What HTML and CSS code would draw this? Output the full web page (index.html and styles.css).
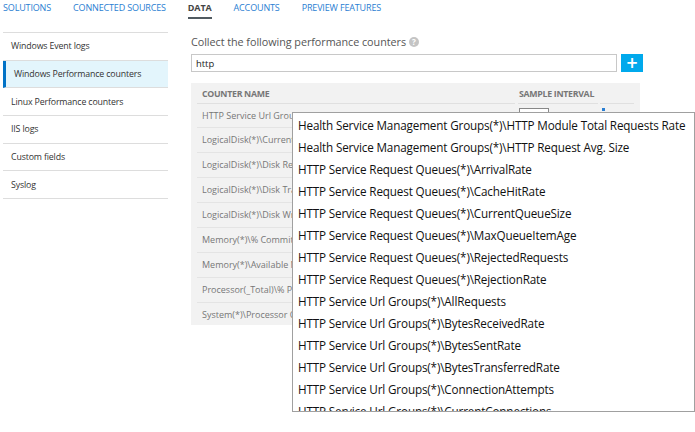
FILE: index.html
```html
<!DOCTYPE html>
<html>
<head>
<meta charset="utf-8">
<link rel="stylesheet" href="styles.css">
</head>
<body>
<nav class="topnav">
  <a class="tab">SOLUTIONS</a>
  <a class="tab">CONNECTED SOURCES</a>
  <a class="tab active">DATA</a>
  <a class="tab">ACCOUNTS</a>
  <a class="tab">PREVIEW FEATURES</a>
</nav>
<div class="main">
  <ul class="sidenav">
    <li>Windows Event logs</li>
    <li class="selected">Windows Performance counters</li>
    <li>Linux Performance counters</li>
    <li>IIS logs</li>
    <li>Custom fields</li>
    <li>Syslog</li>
  </ul>
  <section class="content">
    <div class="title">Collect the following performance counters <span class="help">?</span></div>
    <div class="search">
      <div class="input">http</div>
      <button class="add">+</button>
    </div>
    <div class="table">
      <div class="thead">
        <div class="c-name">COUNTER NAME</div>
        <div class="c-int">SAMPLE INTERVAL</div>
        <div class="c-act"></div>
      </div>
      <div class="row"><div class="c-name">HTTP Service Url Groups(*)\AllRequests</div><div class="c-int"><span class="box"></span></div><div class="c-act"><span class="del"></span></div></div>
      <div class="row"><div class="c-name">LogicalDisk(*)\Current Disk Queue Length</div><div class="c-int"></div><div class="c-act"></div></div>
      <div class="row"><div class="c-name">LogicalDisk(*)\Disk Reads/sec</div><div class="c-int"></div><div class="c-act"></div></div>
      <div class="row"><div class="c-name">LogicalDisk(*)\Disk Transfers/sec</div><div class="c-int"></div><div class="c-act"></div></div>
      <div class="row"><div class="c-name">LogicalDisk(*)\Disk Writes/sec</div><div class="c-int"></div><div class="c-act"></div></div>
      <div class="row"><div class="c-name">Memory(*)\% Committed Bytes In Use</div><div class="c-int"></div><div class="c-act"></div></div>
      <div class="row"><div class="c-name">Memory(*)\Available MBytes</div><div class="c-int"></div><div class="c-act"></div></div>
      <div class="row"><div class="c-name">Processor(_Total)\% Processor Time</div><div class="c-int"></div><div class="c-act"></div></div>
      <div class="row last"><div class="c-name">System(*)\Processor Queue Length</div><div class="c-int"></div><div class="c-act"></div></div>
    </div>
  </section>
</div>
<ul class="dropdown">
  <li>Health Service Management Groups(*)\HTTP Module Total Requests Rate</li>
  <li>Health Service Management Groups(*)\HTTP Request Avg. Size</li>
  <li>HTTP Service Request Queues(*)\ArrivalRate</li>
  <li>HTTP Service Request Queues(*)\CacheHitRate</li>
  <li>HTTP Service Request Queues(*)\CurrentQueueSize</li>
  <li>HTTP Service Request Queues(*)\MaxQueueItemAge</li>
  <li>HTTP Service Request Queues(*)\RejectedRequests</li>
  <li>HTTP Service Request Queues(*)\RejectionRate</li>
  <li>HTTP Service Url Groups(*)\AllRequests</li>
  <li>HTTP Service Url Groups(*)\BytesReceivedRate</li>
  <li>HTTP Service Url Groups(*)\BytesSentRate</li>
  <li>HTTP Service Url Groups(*)\BytesTransferredRate</li>
  <li>HTTP Service Url Groups(*)\ConnectionAttempts</li>
  <li>HTTP Service Url Groups(*)\CurrentConnections</li>
</ul>
</body>
</html>
```
FILE: styles.css
```css
* { box-sizing: border-box; }
html, body { margin: 0; padding: 0; background: #fff; }
body {
  font-family: "Open Sans", "Noto Sans", sans-serif;
  color: #333;
  width: 695px;
  height: 432px;
  overflow: hidden;
  position: relative;
}
.topnav {
  display: flex;
  gap: 22px;
  padding: 0 0 0 3px;
  height: 32px;
}
.tab {
  font-size: 9px;
  color: #2a7ed2;
  line-height: 14px;
  padding-top: 1px;
  height: 19px;
  letter-spacing: -0.15px;
}
.tab.active {
  color: #444;
  font-weight: 700;
  border-bottom: 2px solid #505a60;
}
.main {
  display: flex;
}
.sidenav {
  list-style: none;
  margin: 0 0 0 3px;
  padding: 0;
  width: 165px;
  border-top: 1px solid #ddd;
}
.sidenav li {
  height: 27.7px;
  font-size: 8.8px;
  letter-spacing: -0.15px;
  color: #333;
  display: flex;
  align-items: center;
  padding-left: 8px;
  border-bottom: 1px solid #ddd;
}
.sidenav li.selected {
  background: #e3f5fc;
  border-left: 3px solid #0072c6;
  padding-left: 8px;
}
.content {
  margin-left: 23px;
  width: 452px;
}
.title {
  font-size: 10.8px;
  color: #555;
  height: 22px;
  padding-top: 2px;
  display: flex;
  align-items: flex-start;
  gap: 3px;
  letter-spacing: -0.05px;
}
.help {
  display: inline-block;
  width: 10px;
  height: 10px;
  border-radius: 50%;
  background: #c4c4c4;
  color: #fff;
  font-size: 8px;
  font-weight: 700;
  line-height: 10px;
  text-align: center;
  margin-top: 3px;
}
.search {
  display: flex;
  gap: 4px;
  height: 18px;
}
.input {
  width: 426px;
  border: 1px solid #c8c8c8;
  font-size: 9.4px;
  padding: 2px 4px;
  line-height: 13px;
  color: #222;
}
.add {
  width: 22px;
  height: 18px;
  border: none;
  background: #00a9ec;
  color: #fff;
  font-size: 15px;
  font-weight: 700;
  line-height: 16px;
  padding: 0;
  font-family: "DejaVu Sans", sans-serif;
}
.table {
  margin-top: 11px;
  width: 449px;
  background: #f2f2f2;
  padding: 0 6px 0 6px;
}
.thead, .row {
  display: flex;
}
.thead {
  height: 20.5px;
}
.thead > div {
  font-size: 8.8px;
  font-weight: 700;
  color: #777;
  letter-spacing: -0.3px;
  border-bottom: 1px solid #e0e0e0;
  padding: 5px 0 0 5px;
}
.c-name { width: 318px; overflow: hidden; white-space: nowrap; }
.c-int { width: 80px; margin-left: 3px; position: relative; }
.c-act { width: 34px; margin-left: 2px; position: relative; }
.row {
  height: 24.9px;
}
.row > div {
  border-bottom: 1px solid #e4e4e4;
}
.row.last { height: 22px; }
.row.last > div { border-bottom: none; }
.row .c-name {
  font-size: 9px;
  color: #777;
  padding: 5px 0 0 5px;
}
.thead .c-int { padding-left: 1px; }
.box {
  position: absolute;
  left: 1px;
  top: 4px;
  width: 30px;
  height: 16px;
  border: 1px solid #888;
  background: #fff;
}
.del {
  position: absolute;
  left: 2px;
  top: 4px;
  width: 3px;
  height: 3px;
  background: #2a7ed2;
}
.dropdown {
  position: absolute;
  left: 292px;
  top: 112px;
  width: 403px;
  height: 300px;
  margin: 0;
  padding: 1px 0 0 0;
  list-style: none;
  background: #fff;
  border: 1px solid #a0a0a0;
  overflow: hidden;
}
.dropdown li {
  height: 22px;
  line-height: 22px;
  font-size: 11.7px;
  color: #111;
  padding-left: 5px;
  white-space: nowrap;
  letter-spacing: -0.15px;
}
```
